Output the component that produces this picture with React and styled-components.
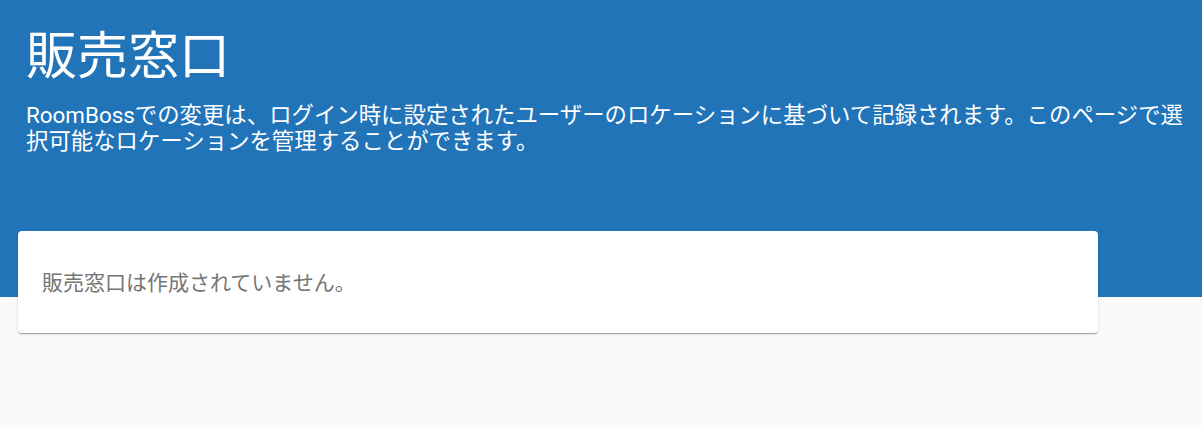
import styled, { createGlobalStyle } from 'styled-components';

const GlobalStyle = createGlobalStyle`
  body {
    margin: 0;
    background: #fafafa;
    font-family: Roboto, "Noto Sans CJK JP", sans-serif;
  }
`;

const Page = styled.div`
  width: 100%;
  min-height: 428px;
  background: #fafafa;
`;

const Header = styled.header`
  height: 297px;
  box-sizing: border-box;
  padding: 27px 8px 0 26px;
  background: #2174b8;
  color: #ffffff;
`;

const Title = styled.h1`
  margin: 0;
  font-size: 51px;
  font-weight: 400;
  line-height: 60px;
`;

const Subtitle = styled.p`
  margin: 15px 0 0;
  font-size: 22.4px;
  line-height: 26px;
`;

const Card = styled.section`
  width: 1080px;
  box-sizing: border-box;
  margin: -66px 0 0 18px;
  height: 102px;
  padding: 0 24px;
  display: flex;
  align-items: center;
  background: #ffffff;
  border-radius: 4px;
  box-shadow: 0 2px 1px -1px rgba(0, 0, 0, 0.2), 0 1px 1px 0 rgba(0, 0, 0, 0.14),
    0 1px 3px 0 rgba(0, 0, 0, 0.12);
`;

const EmptyText = styled.p`
  margin: 0 0 3px;
  font-size: 21px;
  color: #757575;
`;

function App() {
  return (
    <Page>
      <GlobalStyle />
      <Header>
        <Title>販売窓口</Title>
        <Subtitle>
          RoomBossでの変更は、ログイン時に設定されたユーザーのロケーションに基づいて記録されます。このページで選択可能なロケーションを管理することができます。
        </Subtitle>
      </Header>
      <Card>
        <EmptyText>販売窓口は作成されていません。</EmptyText>
      </Card>
    </Page>
  );
}

export default App;
